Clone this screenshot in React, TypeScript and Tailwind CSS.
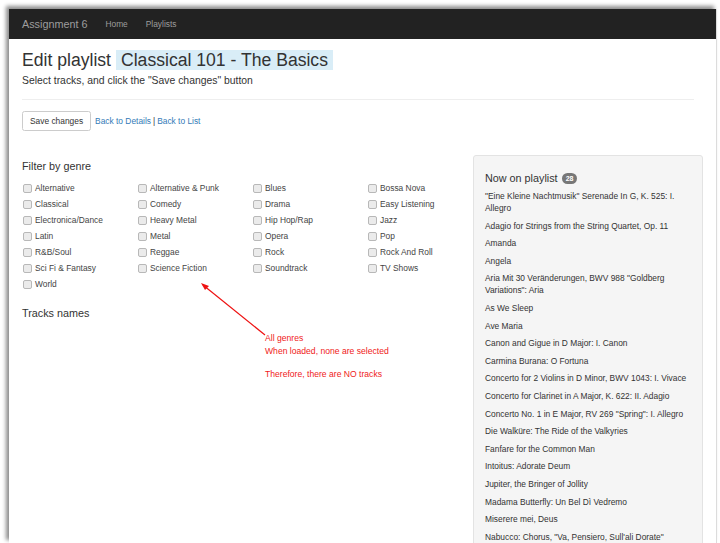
import React from 'react'

const genres = [
  'Alternative', 'Alternative & Punk', 'Blues', 'Bossa Nova',
  'Classical', 'Comedy', 'Drama', 'Easy Listening',
  'Electronica/Dance', 'Heavy Metal', 'Hip Hop/Rap', 'Jazz',
  'Latin', 'Metal', 'Opera', 'Pop',
  'R&B/Soul', 'Reggae', 'Rock', 'Rock And Roll',
  'Sci Fi & Fantasy', 'Science Fiction', 'Soundtrack', 'TV Shows',
  'World',
]

const tracks = [
  '"Eine Kleine Nachtmusik" Serenade In G, K. 525: I. Allegro',
  'Adagio for Strings from the String Quartet, Op. 11',
  'Amanda',
  'Angela',
  'Aria Mit 30 Veränderungen, BWV 988 "Goldberg Variations": Aria',
  'As We Sleep',
  'Ave Maria',
  'Canon and Gigue in D Major: I. Canon',
  'Carmina Burana: O Fortuna',
  'Concerto for 2 Violins in D Minor, BWV 1043: I. Vivace',
  'Concerto for Clarinet in A Major, K. 622: II. Adagio',
  'Concerto No. 1 in E Major, RV 269 "Spring": I. Allegro',
  'Die Walküre: The Ride of the Valkyries',
  'Fanfare for the Common Man',
  'Intoitus: Adorate Deum',
  'Jupiter, the Bringer of Jollity',
  'Madama Butterfly: Un Bel Dì Vedremo',
  'Miserere mei, Deus',
  'Nabucco: Chorus, "Va, Pensiero, Sull\'ali Dorate"',
]

const App = () => {
  return (
    <div className="w-[720px] h-[543px] bg-white overflow-hidden font-['Liberation_Sans',Arial,sans-serif]">
      <div className="relative ml-[9px] mt-[9px] w-[708px] h-[534px] bg-white overflow-hidden border-r border-[#dcdcdc] shadow-[-3px_-3px_4px_rgba(0,0,0,0.45)]">
        {/* navbar */}
        <div className="h-[30px] bg-[#222222] flex items-center pl-[13px] gap-[18px] text-[#9d9d9d]">
          <span className="text-[10.8px]">Assignment 6</span>
          <span className="text-[8.4px]">Home</span>
          <span className="text-[8.4px]">Playlists</span>
        </div>

        <div className="pl-[13px] text-[#333333]">
          <div className="mt-[11px] h-[20px] flex items-center text-[17.6px] leading-[20px]">
            <span>Edit playlist</span>
            <span className="ml-[5px] px-[5px] bg-[#d9edf7]">Classical 101 - The Basics</span>
          </div>
          <div className="mt-[4px] text-[10.4px] leading-[14px]">Select tracks, and click the "Save changes" button</div>
          <div className="mt-[11px] w-[672px] border-t border-[#eeeeee]"></div>

          <div className="mt-[11px] flex items-center text-[8.4px]">
            <button className="h-[20px] px-[7px] border border-[#cccccc] rounded-[2.5px] bg-white text-[#333333]">Save changes</button>
            <span className="ml-[4px] text-[#337ab7]">Back to Details</span>
            <span className="mx-[2px]">|</span>
            <span className="text-[#337ab7]">Back to List</span>
          </div>

          <div className="mt-[24px] flex">
            <div className="w-[451px]">
              <div className="mt-[5px] text-[10.8px] leading-[12px]">Filter by genre</div>
              <div className="mt-[8px] grid grid-cols-[115px_115px_115px_115px]">
                {genres.map((g) => (
                  <div key={g} className="h-[16px] flex items-center text-[8.4px] text-[#444444]">
                    <span className="ml-[1px] w-[9px] h-[9px] rounded-[2px] border border-[#b8b8b8] bg-[#ebebeb]"></span>
                    <span className="ml-[3px]">{g}</span>
                  </div>
                ))}
              </div>
              <div className="mt-[15px] text-[10.8px] leading-[12px]">Tracks names</div>
            </div>

            <div className="w-[230px] h-[400px] bg-[#f5f5f5] border border-[#e3e3e3] rounded-[3px] px-[11px] pt-[16px]">
              <div className="flex items-center text-[10.8px] leading-[12px]">
                <span>Now on playlist</span>
                <span className="ml-[4px] h-[11px] px-[4px] rounded-full bg-[#777777] text-white text-[7px] font-bold leading-[11px]">28</span>
              </div>
              <div className="mt-[6px] text-[8.4px] leading-[12px]">
                {tracks.map((t) => (
                  <div key={t} className="mb-[5.6px]">{t}</div>
                ))}
              </div>
            </div>
          </div>
        </div>

        {/* annotation overlay */}
        <svg className="absolute left-0 top-0" width="708" height="534">
          <line x1="256" y1="326" x2="194" y2="276" stroke="#ee1111" strokeWidth="1.2" />
          <polygon points="192,274 200,277 196,281" fill="#ee1111" />
        </svg>
        <div className="absolute left-[256px] top-[323px] text-[8.6px] leading-[13px] text-[#f01a1a]">
          <div>All genres</div>
          <div>When loaded, none are selected</div>
          <div className="mt-[10px]">Therefore, there are NO tracks</div>
        </div>
      </div>
    </div>
  )
}

export default App
